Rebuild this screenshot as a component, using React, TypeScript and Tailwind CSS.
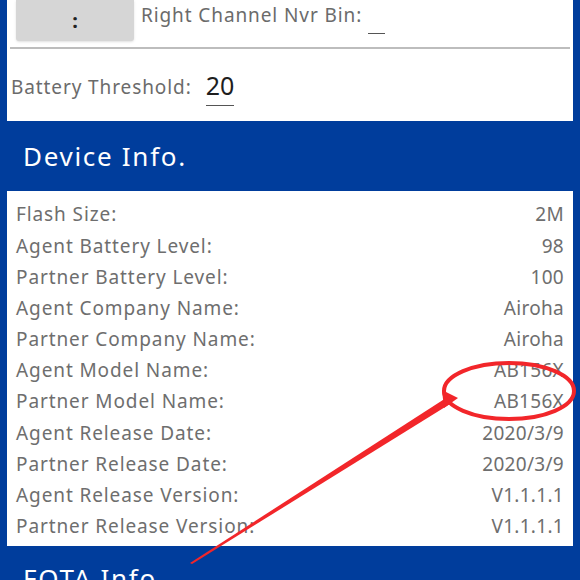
import React from "react";

const rows: [string, string][] = [
  ["Flash Size:", "2M"],
  ["Agent Battery Level:", "98"],
  ["Partner Battery Level:", "100"],
  ["Agent Company Name:", "Airoha"],
  ["Partner Company Name:", "Airoha"],
  ["Agent Model Name:", "AB156X"],
  ["Partner Model Name:", "AB156X"],
  ["Agent Release Date:", "2020/3/9"],
  ["Partner Release Date:", "2020/3/9"],
  ["Agent Release Version:", "V1.1.1.1"],
  ["Partner Release Version:", "V1.1.1.1"],
];

const Annotation = () => (
  <svg className="absolute left-0 top-0 pointer-events-none" width={580} height={580}>
    <ellipse cx={509} cy={391} rx={65} ry={28} fill="none" stroke="#f2262a" strokeWidth={4} />
    <polygon points="190,563 446,398 450,404 192,564" fill="#f2262a" />
    <polygon points="442,390 458,398 444,408" fill="#f2262a" />
  </svg>
);

export default function App() {
  return (
    <div
      className="relative w-[580px] h-[580px] overflow-hidden bg-[#003d9c]"
      style={{ fontFamily: "'Noto Sans', sans-serif" }}
    >
      <div className="mx-[7px] bg-white h-[121px] flex flex-col">
        <div className="flex items-start h-[49px] border-b-2 border-[#bdbdbd] mx-[3px]">
          <div className="ml-[6px] w-[118px] h-[41px] bg-[#d6d6d6] rounded-b-[3px] shadow-sm flex items-center justify-center text-[20px] font-bold text-[#222]">
            :
          </div>
          <div className="ml-[7px] text-[19px] tracking-[0.9px] text-[#6b6b6b] leading-[30px]">
            Right Channel Nvr Bin:
          </div>
          <div className="ml-[6px] mt-[33px] w-[17px] h-[1px] bg-[#555]" />
        </div>
        <div className="flex items-end mt-[22px] ml-[4px]">
          <span className="text-[19px] tracking-[0.9px] text-[#6b6b6b] leading-[30px] mb-[4px]">
            Battery Threshold:
          </span>
          <span className="ml-[14px] text-[25px] text-[#1e1e1e] leading-[28px] border-b border-[#555] pb-[6px]">
            20
          </span>
        </div>
      </div>
      <div className="h-[70px] flex items-center pl-[23px] text-white text-[26px] tracking-[1.7px]">
        Device Info.
      </div>
      <div className="mx-[7px] bg-white h-[355px] pt-[8px] pl-[9px] pr-[9px]">
        {rows.map(([k, v]) => (
          <div
            key={k}
            className="flex justify-between h-[31.2px] items-center text-[19px] text-[#6e6e6e]"
          >
            <span className="tracking-[0.9px]">{k}</span>
            <span className="tracking-[0.3px]">{v}</span>
          </div>
        ))}
      </div>
      <div className="pl-[23px] pt-[13px] text-white text-[26px] tracking-[1.7px]">FOTA Info.</div>
      <Annotation />
    </div>
  );
}
